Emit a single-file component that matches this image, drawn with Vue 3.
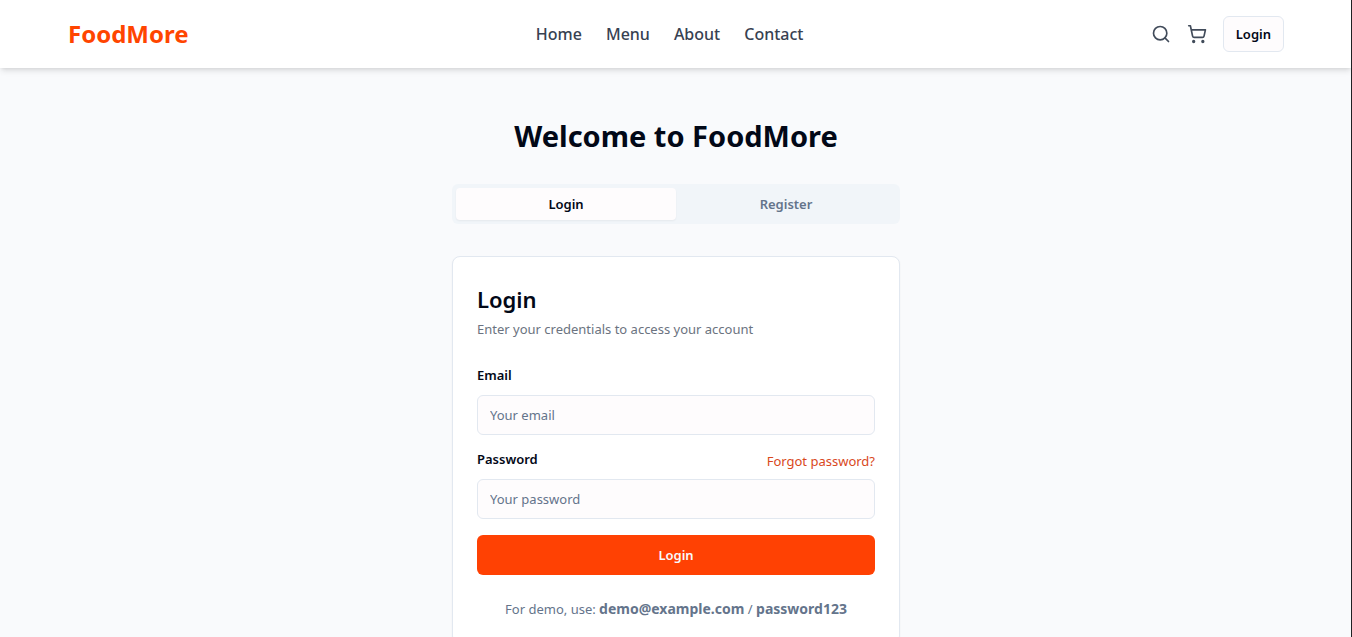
<script setup>
import { ref } from 'vue'

const links = ['Home', 'Menu', 'About', 'Contact']
const tabs = ['Login', 'Register']
const activeTab = ref('Login')
const email = ref('')
const password = ref('')
</script>

<template>
  <div class="page">
    <header class="header">
      <div class="header-inner">
        <a class="logo" href="#">FoodMore</a>
        <nav class="nav">
          <a v-for="link in links" :key="link" href="#" class="nav-link">{{ link }}</a>
        </nav>
        <div class="actions">
          <button class="icon-button" type="button" aria-label="Search">
            <svg viewBox="0 0 24 24"><circle cx="11" cy="11" r="8" /><path d="m21 21-4.3-4.3" /></svg>
          </button>
          <button class="icon-button" type="button" aria-label="Cart">
            <svg viewBox="0 0 24 24">
              <circle cx="8" cy="21" r="1" /><circle cx="19" cy="21" r="1" />
              <path d="M2.05 2.05h2l2.66 12.42a2 2 0 0 0 2 1.58h9.78a2 2 0 0 0 1.95-1.57l1.65-7.43H5.12" />
            </svg>
          </button>
          <button class="login-button" type="button">Login</button>
        </div>
      </div>
    </header>

    <main class="main">
      <h1 class="title">Welcome to FoodMore</h1>
      <div class="tabs" role="tablist">
        <button
          v-for="tab in tabs"
          :key="tab"
          type="button"
          role="tab"
          class="tab"
          :class="{ active: activeTab === tab }"
          :aria-selected="activeTab === tab"
          @click="activeTab = tab"
        >{{ tab }}</button>
      </div>

      <section class="card">
        <h2 class="card-title">Login</h2>
        <p class="card-text">Enter your credentials to access your account</p>
        <form class="form" @submit.prevent>
          <div class="field">
            <div class="label-row">
              <label class="label" for="email">Email</label>
            </div>
            <input id="email" v-model="email" class="input" type="email" placeholder="Your email" />
          </div>
          <div class="field">
            <div class="label-row">
              <label class="label" for="password">Password</label>
              <a class="forgot" href="#">Forgot password?</a>
            </div>
            <input id="password" v-model="password" class="input" type="password" placeholder="Your password" />
          </div>
          <button class="submit" type="submit">Login</button>
        </form>
        <p class="demo">For demo, use: <strong>demo@example.com</strong> / <strong>password123</strong></p>
      </section>
    </main>
  </div>
</template>

<style>
html {
  scrollbar-width: none;
}
body {
  margin: 0;
  background: #f9fafc;
}
</style>

<style scoped>
.page {
  min-height: 100vh;
  background: #f9fafc;
  color: #020817;
  font-family: "Segoe UI", "Noto Sans", "Open Sans", sans-serif;
  font-size: 13px;
  line-height: 20px;
}
.page * {
  box-sizing: border-box;
}
.page::after {
  content: "";
  position: fixed;
  inset: 0 0 0 auto;
  z-index: 2;
  width: 1px;
  background: #202124;
}
a {
  text-decoration: none;
}
button,
input {
  font: inherit;
  color: inherit;
}
button {
  cursor: pointer;
}
.header {
  position: sticky;
  top: 0;
  z-index: 1;
  background: #fff;
  box-shadow: 0 4px 6px -1px rgba(0, 0, 0, 0.1), 0 2px 4px -2px rgba(0, 0, 0, 0.1);
}
.header-inner {
  display: flex;
  align-items: center;
  justify-content: space-between;
  max-width: 1280px;
  margin: 0 auto;
  padding: 16px 32px;
}
.logo {
  color: #ff4500;
  font-size: 24px;
  font-weight: 700;
  line-height: 32px;
}
.nav {
  display: flex;
  gap: 24px;
}
.nav-link {
  color: #374151;
  font-size: 16px;
  font-weight: 500;
  line-height: 24px;
}
.actions {
  display: flex;
  align-items: center;
  gap: 16px;
}
.icon-button {
  display: flex;
  padding: 0;
  border: 0;
  background: none;
  color: #414b5a;
}
.icon-button svg {
  width: 20px;
  height: 20px;
  fill: none;
  stroke: currentColor;
  stroke-width: 2;
  stroke-linecap: round;
  stroke-linejoin: round;
}
.login-button {
  height: 36px;
  padding: 0 12px;
  border: 1px solid #e2e8f0;
  border-radius: 6px;
  background: #fefcfd;
  font-weight: 600;
}
.main {
  max-width: 448px;
  margin: 0 auto;
  padding: 48px 0;
}
.title {
  margin: 0 0 28px;
  font-size: 29px;
  font-weight: 700;
  line-height: 40px;
  text-align: center;
}
.tabs {
  display: grid;
  grid-template-columns: 1fr 1fr;
  margin-bottom: 32px;
  padding: 4px;
  border-radius: 6px;
  background: #f1f5f9;
}
.tab {
  padding: 6px 12px;
  border: 0;
  border-radius: 4px;
  background: none;
  color: #64748b;
  font-weight: 600;
}
.tab.active {
  background: #fefcfd;
  color: #020817;
  box-shadow: 0 1px 2px rgba(0, 0, 0, 0.05);
}
.card {
  padding: 24px;
  border: 1px solid #e2e8f0;
  border-radius: 8px;
  background: #fff;
  box-shadow: 0 1px 2px rgba(0, 0, 0, 0.05);
}
.card-title {
  margin: 0 0 2px;
  font-size: 22px;
  font-weight: 600;
  line-height: 36px;
}
.card-text {
  margin: 0 0 28px;
  color: #6b7380;
}
.form {
  display: grid;
  gap: 16px;
}
.field {
  display: grid;
  gap: 8px;
}
.label-row {
  display: flex;
  align-items: flex-start;
  justify-content: space-between;
  min-height: 20px;
}
.label {
  font-weight: 600;
  line-height: 16px;
}
.forgot {
  color: #d9481c;
}
.input {
  width: 100%;
  height: 40px;
  padding: 0 12px;
  border: 1px solid #e2e8f0;
  border-radius: 6px;
  background: #fefcfd;
}
.input::placeholder {
  color: #64748b;
}
.submit {
  height: 40px;
  border: 0;
  border-radius: 6px;
  background: #ff4103;
  color: #f8fafc;
  font-weight: 600;
}
.demo {
  margin: 24px 0 0;
  color: #64748b;
  text-align: center;
}
.demo strong {
  font-size: 14px;
}
</style>
